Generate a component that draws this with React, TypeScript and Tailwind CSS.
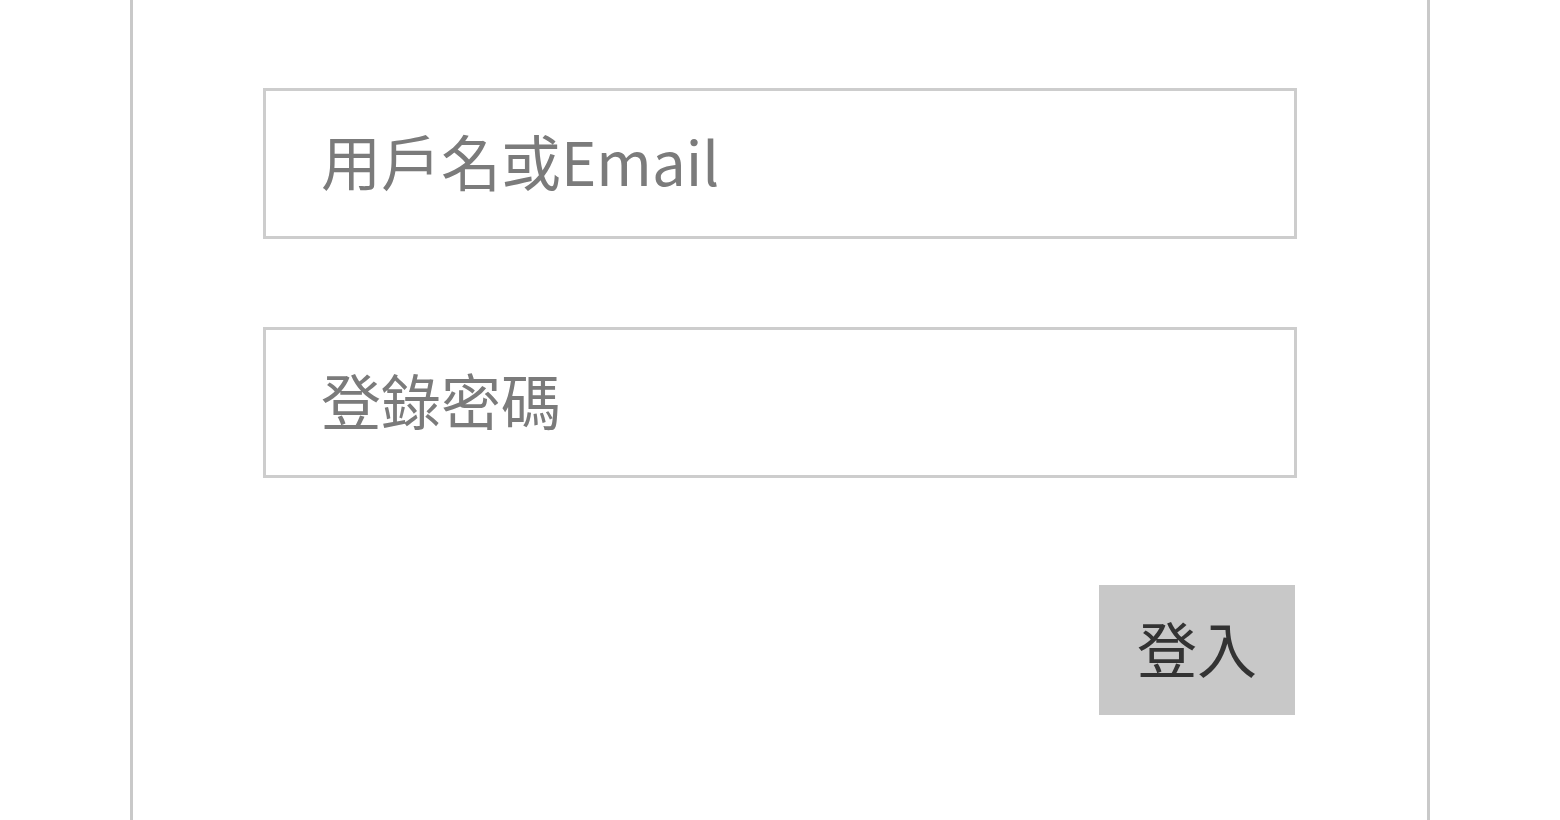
import React from "react";

export default function App() {
  return (
    <div className="w-[1560px] h-[820px] bg-white overflow-hidden flex justify-center" style={{ fontFamily: '"Noto Sans CJK TC", "Noto Sans", sans-serif' }}>
      <div className="w-[1300px] h-full border-x-[3px] border-[#c9c9c9] px-[130px] pt-[88px] flex flex-col">
        <input
          type="text"
          placeholder="用戶名或Email"
          className="w-full h-[151px] border-[3px] border-[#cdcdcd] bg-white pl-[55px] pb-[8px] text-[60px] text-[#555] placeholder:text-[#7b7b7b] outline-none"
        />
        <input
          type="password"
          placeholder="登錄密碼"
          className="mt-[88px] w-full h-[151px] border-[3px] border-[#cdcdcd] bg-white pl-[55px] pb-[8px] text-[60px] text-[#555] placeholder:text-[#7b7b7b] outline-none"
        />
        <div className="mt-[107px] flex justify-end pr-[2px]">
          <button className="w-[196px] h-[130px] bg-[#c8c8c8] text-[60px] text-[#333] leading-none flex items-center justify-center pb-[6px]">
            登入
          </button>
        </div>
      </div>
    </div>
  );
}
